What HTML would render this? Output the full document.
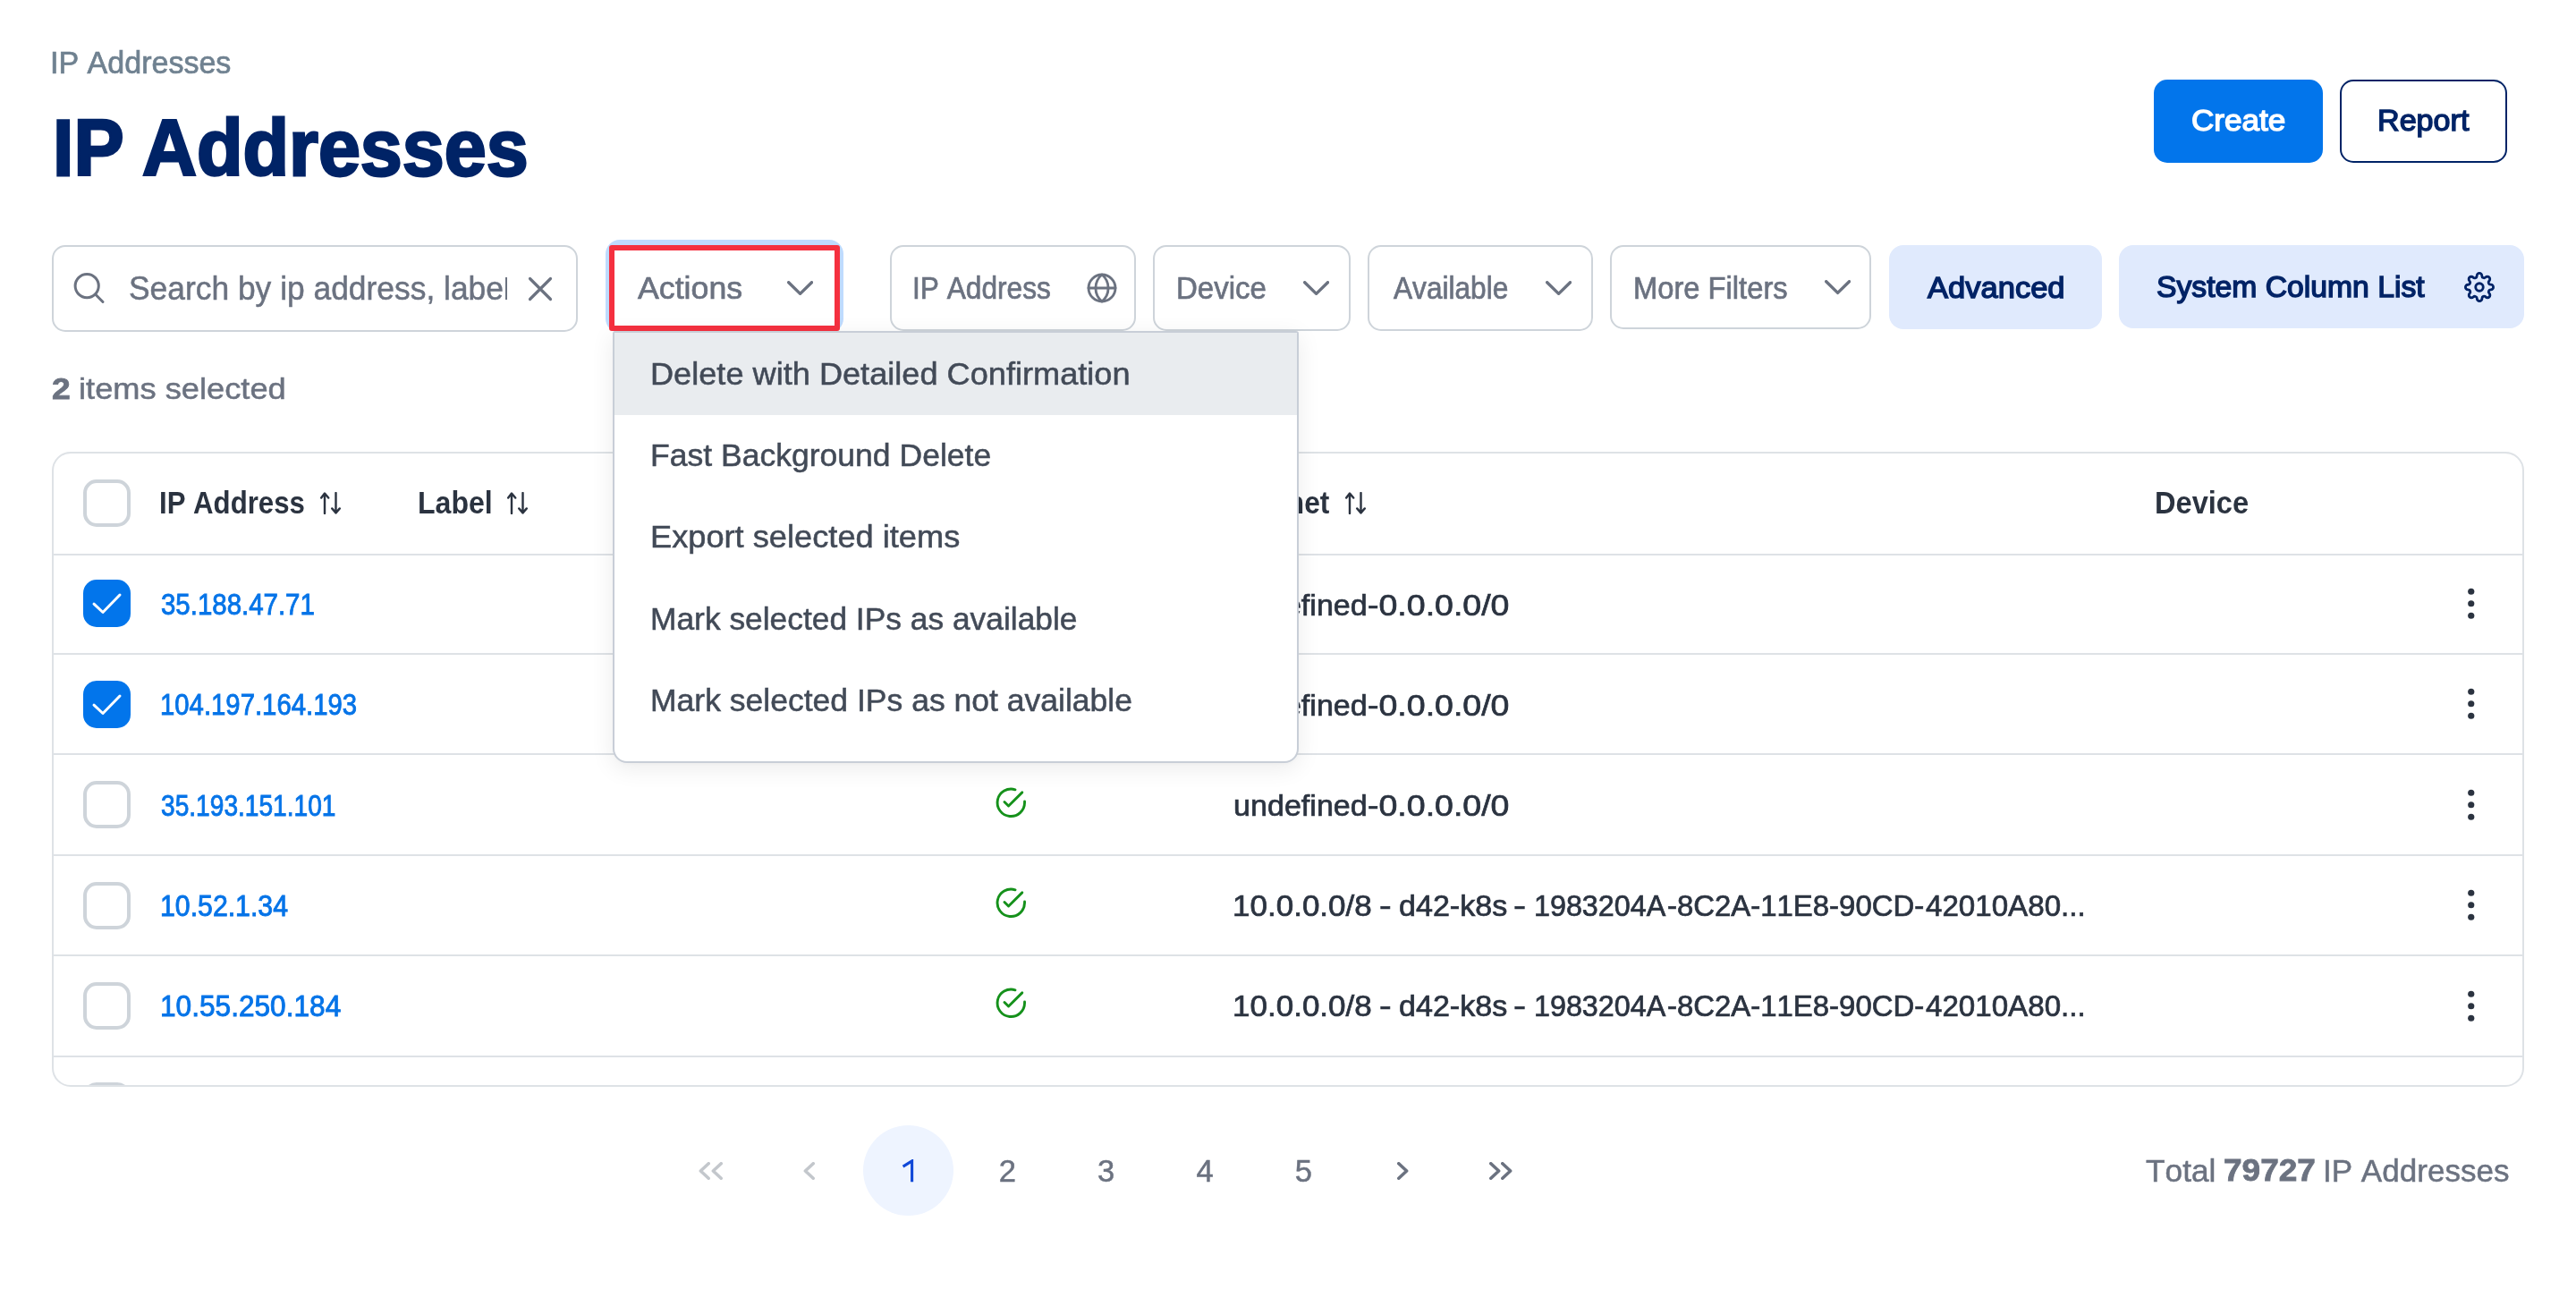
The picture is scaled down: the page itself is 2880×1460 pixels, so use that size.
<!DOCTYPE html>
<html><head><meta charset="utf-8"><title>IP Addresses</title>
<style>
html,body{margin:0;padding:0}
body{width:2880px;height:1460px;position:relative;overflow:hidden;background:#fff;
font-family:"Liberation Sans",sans-serif;font-kerning:none;}
.t{position:absolute;white-space:nowrap;line-height:1;transform-origin:0 0;display:block}
.b{position:absolute;display:block}
#page{position:absolute;left:0;top:0;width:2880px;height:1460px;will-change:transform}
</style></head>
<body>
<div id="page">
<!-- header -->
<span class="t" style="left:55.96px;top:53px;font-size:34.59px;transform:scaleX(0.9839);color:#6f8190;-webkit-text-stroke:0.7px #6f8190;">IP Addresses</span>
<span class="t" style="left:58.87px;top:121px;font-size:88.96px;transform:scaleX(0.946);color:#002366;font-weight:700;-webkit-text-stroke:2.8px #002366;">IP</span>
<span class="t" style="left:158.6px;top:121px;font-size:88.96px;transform:scaleX(0.9489);color:#002366;font-weight:700;-webkit-text-stroke:2.8px #002366;">Addresses</span>
<div class="b" style="left:2408px;top:89px;width:189px;height:93px;background:#0275eb;border-radius:15px;"></div>
<span class="t" style="left:2449.92px;top:118px;font-size:33.58px;transform:scaleX(1.0438);color:#fff;-webkit-text-stroke:1.4px #fff;">Create</span>
<div class="b" style="left:2616px;top:89px;width:187px;height:93px;border:2.5px solid #002366;border-radius:15px;box-sizing:border-box;"></div>
<span class="t" style="left:2657.65px;top:118px;font-size:33.58px;transform:scaleX(1.0161);color:#002366;-webkit-text-stroke:1.4px #002366;">Report</span>
<!-- filter bar -->
<div class="b" style="left:58px;top:274px;width:588px;height:97px;border:2px solid #ced4da;border-radius:15px;box-sizing:border-box;background:#fff;"></div>
<svg class="b" style="left:80px;top:302px;" width="40" height="40" viewBox="0 0 40 40"><circle cx="17.2" cy="17.6" r="13.1" fill="none" stroke="#6b7280" stroke-width="3"/><path d="M26.6 27 L35 35.5" stroke="#6b7280" stroke-width="3" stroke-linecap="round"/></svg>
<div class="b" style="left:140px;top:290px;width:427px;height:64px;overflow:hidden">
<span class="t" style="left:3.79px;top:15px;font-size:36.34px;transform:scaleX(0.974);color:#6b7280;-webkit-text-stroke:0.5px #6b7280">Search by ip address, labe</span>
<div class="b" style="left:425.3px;top:19.8px;width:1.8px;height:25.2px;background:#6b7280"></div>
</div>
<svg class="b" style="left:589px;top:308px;" width="30" height="30" viewBox="0 0 30 30"><path d="M3.5 3.5 L26.5 26.5 M26.5 3.5 L3.5 26.5" stroke="#6b7280" stroke-width="3.2" stroke-linecap="round"/></svg>
<div class="b" style="left:677px;top:268px;width:266px;height:104px;background:#bfdbfe;border-radius:16px;"></div>
<div class="b" style="left:681px;top:274px;width:258.4px;height:95.7px;border:6px solid #f5303f;border-radius:3px;box-sizing:border-box;background:#fff;"></div>
<span class="t" style="left:712.78px;top:305px;font-size:34.3px;transform:scaleX(1.0415);color:#6b7280;-webkit-text-stroke:0.7px #6b7280;">Actions</span>
<svg class="b" style="left:880px;top:313.8px;" width="29.2" height="16.4" viewBox="0 0 29.2 16.4"><path d="M1.7 1.7 L14.6 14.36 L27.5 1.7" fill="none" stroke="#6b7280" stroke-width="3.4" stroke-linecap="round" stroke-linejoin="round"/></svg>
<div class="b" style="left:995px;top:274px;width:275px;height:96px;border:2px solid #ced4da;border-radius:15px;box-sizing:border-box;background:#fff;"></div>
<span class="t" style="left:1020.43px;top:305px;font-size:34.3px;transform:scaleX(0.923);color:#6b7280;-webkit-text-stroke:0.7px #6b7280;">IP Address</span>
<svg class="b" style="left:1213.7px;top:304.1px;" width="36" height="36" viewBox="0 0 24 24"><g fill="none" stroke="#6b7280" stroke-width="1.9" stroke-linecap="round" stroke-linejoin="round"><circle cx="12" cy="12" r="10"/><line x1="2" y1="12" x2="22" y2="12"/><path d="M12 2a13 13 0 0 1 4.7 10 13 13 0 0 1-4.7 10 13 13 0 0 1-4.7-10 13 13 0 0 1 4.7-10z"/></g></svg>
<div class="b" style="left:1289px;top:274px;width:221px;height:96px;border:2px solid #ced4da;border-radius:15px;box-sizing:border-box;background:#fff;"></div>
<span class="t" style="left:1315.14px;top:305px;font-size:34.3px;transform:scaleX(0.9631);color:#6b7280;-webkit-text-stroke:0.7px #6b7280;">Device</span>
<svg class="b" style="left:1457.2px;top:313.8px;" width="29.2" height="16.4" viewBox="0 0 29.2 16.4"><path d="M1.7 1.7 L14.6 14.36 L27.5 1.7" fill="none" stroke="#6b7280" stroke-width="3.4" stroke-linecap="round" stroke-linejoin="round"/></svg>
<div class="b" style="left:1529px;top:274px;width:252px;height:96px;border:2px solid #ced4da;border-radius:15px;box-sizing:border-box;background:#fff;"></div>
<span class="t" style="left:1557.79px;top:305px;font-size:34.3px;transform:scaleX(0.9214);color:#6b7280;-webkit-text-stroke:0.7px #6b7280;">Available</span>
<svg class="b" style="left:1728px;top:313.8px;" width="29.2" height="16.4" viewBox="0 0 29.2 16.4"><path d="M1.7 1.7 L14.6 14.36 L27.5 1.7" fill="none" stroke="#6b7280" stroke-width="3.4" stroke-linecap="round" stroke-linejoin="round"/></svg>
<div class="b" style="left:1800px;top:274px;width:292px;height:94px;border:2px solid #ced4da;border-radius:15px;box-sizing:border-box;background:#fff;"></div>
<span class="t" style="left:1825.67px;top:305px;font-size:34.3px;transform:scaleX(0.9536);color:#6b7280;-webkit-text-stroke:0.7px #6b7280;">More Filters</span>
<svg class="b" style="left:2040.2px;top:313.2px;" width="29.2" height="16.4" viewBox="0 0 29.2 16.4"><path d="M1.7 1.7 L14.6 14.36 L27.5 1.7" fill="none" stroke="#6b7280" stroke-width="3.4" stroke-linecap="round" stroke-linejoin="round"/></svg>
<div class="b" style="left:2112px;top:274px;width:238px;height:94px;background:#e0eafd;border-radius:16px;"></div>
<span class="t" style="left:2154.88px;top:306px;font-size:32.85px;transform:scaleX(1.0516);color:#002366;-webkit-text-stroke:1.4px #002366;">Advanced</span>
<div class="b" style="left:2369px;top:274px;width:453px;height:93px;background:#e0eafd;border-radius:16px;"></div>
<span class="t" style="left:2410.92px;top:305px;font-size:32.49px;transform:scaleX(1.0373);color:#002366;-webkit-text-stroke:1.4px #002366;">System Column List</span>
<svg class="b" style="left:2755px;top:303.5px;" width="34" height="34" viewBox="0 0 24 24"><g fill="none" stroke="#002366" stroke-width="2" stroke-linecap="round" stroke-linejoin="round"><circle cx="12" cy="12" r="3"/><path d="M19.4 15a1.65 1.65 0 0 0 .33 1.82l.06.06a2 2 0 0 1 0 2.83 2 2 0 0 1-2.83 0l-.06-.06a1.65 1.65 0 0 0-1.82-.33 1.65 1.65 0 0 0-1 1.51V21a2 2 0 0 1-2 2 2 2 0 0 1-2-2v-.09A1.65 1.65 0 0 0 9 19.4a1.65 1.65 0 0 0-1.82.33l-.06.06a2 2 0 0 1-2.83 0 2 2 0 0 1 0-2.83l.06-.06a1.65 1.65 0 0 0 .33-1.82 1.65 1.65 0 0 0-1.51-1H3a2 2 0 0 1-2-2 2 2 0 0 1 2-2h.09A1.65 1.65 0 0 0 4.6 9a1.65 1.65 0 0 0-.33-1.82l-.06-.06a2 2 0 0 1 0-2.83 2 2 0 0 1 2.83 0l.06.06a1.65 1.65 0 0 0 1.82.33H9a1.65 1.65 0 0 0 1-1.51V3a2 2 0 0 1 2-2 2 2 0 0 1 2 2v.09a1.65 1.65 0 0 0 1 1.51 1.65 1.65 0 0 0 1.82-.33l.06-.06a2 2 0 0 1 2.83 0 2 2 0 0 1 0 2.83l-.06.06a1.65 1.65 0 0 0-.33 1.82V9a1.65 1.65 0 0 0 1.51 1H21a2 2 0 0 1 2 2 2 2 0 0 1-2 2h-.09a1.65 1.65 0 0 0-1.51 1z"/></g></svg>
<span class="t" style="left:57.86px;top:418px;font-size:33.58px;transform:scaleX(1.1101);color:#6b7280;font-weight:700;-webkit-text-stroke:0.8px #6b7280;">2</span>
<span class="t" style="left:87.82px;top:418px;font-size:33.58px;transform:scaleX(1.0798);color:#6b7280;-webkit-text-stroke:0.5px #6b7280;">items selected</span>
<!-- table -->
<div class="b" style="left:58px;top:505px;width:2764px;height:710px;border:2px solid #dee2e6;border-radius:21px;box-sizing:border-box;"></div>
<div class="b" style="left:60px;top:619px;width:2760px;height:2px;background:#dee2e6;"></div>
<div class="b" style="left:60px;top:730px;width:2760px;height:2px;background:#dee2e6;"></div>
<div class="b" style="left:60px;top:842px;width:2760px;height:2px;background:#dee2e6;"></div>
<div class="b" style="left:60px;top:954.5px;width:2760px;height:2.0px;background:#dee2e6;"></div>
<div class="b" style="left:60px;top:1067px;width:2760px;height:2px;background:#dee2e6;"></div>
<div class="b" style="left:60px;top:1180px;width:2760px;height:2px;background:#dee2e6;"></div>
<div class="b" style="left:93px;top:536.25px;width:52.5px;height:52.5px;border:4px solid #ced4da;border-radius:15px;box-sizing:border-box;background:#fff;"></div>
<span class="t" style="left:178.41px;top:545px;font-size:34.52px;transform:scaleX(0.9031);color:#2b3340;font-weight:700;">IP Address</span>
<svg class="b" style="left:357.6px;top:549.5px;" width="23" height="25" viewBox="0 0 23 25"><g fill="none" stroke="#2b3340" stroke-width="2.4" stroke-linecap="round" stroke-linejoin="round"><path d="M5 24 V1.6 M1.2 6.6 L5 1.6 L9.2 6.6"/><path d="M17.5 1 V23.4 M13.2 18.4 L17.5 23.4 L21.8 18.4"/></g></svg>
<span class="t" style="left:466.86px;top:545px;font-size:34.52px;transform:scaleX(0.9279);color:#2b3340;font-weight:700;">Label</span>
<svg class="b" style="left:566.8px;top:549.5px;" width="23" height="25" viewBox="0 0 23 25"><g fill="none" stroke="#2b3340" stroke-width="2.4" stroke-linecap="round" stroke-linejoin="round"><path d="M5 24 V1.6 M1.2 6.6 L5 1.6 L9.2 6.6"/><path d="M17.5 1 V23.4 M13.2 18.4 L17.5 23.4 L21.8 18.4"/></g></svg>
<span class="t" style="left:1379.09px;top:545px;font-size:34.52px;transform:scaleX(0.9172);color:#2b3340;font-weight:700;">Subnet</span>
<svg class="b" style="left:1504.4px;top:549.5px;" width="23" height="25" viewBox="0 0 23 25"><g fill="none" stroke="#2b3340" stroke-width="2.4" stroke-linecap="round" stroke-linejoin="round"><path d="M5 24 V1.6 M1.2 6.6 L5 1.6 L9.2 6.6"/><path d="M17.5 1 V23.4 M13.2 18.4 L17.5 23.4 L21.8 18.4"/></g></svg>
<span class="t" style="left:2408.82px;top:545px;font-size:34.52px;transform:scaleX(0.9436);color:#2b3340;font-weight:700;">Device</span>
<div class="b" style="left:93px;top:648px;width:52.5px;height:52.5px;background:#0275eb;border-radius:15px;"></div>
<svg class="b" style="left:93px;top:648px;" width="52.5" height="52.5" viewBox="0 0 52.5 52.5"><path d="M12 27.2 L22 36.5 L41 17" fill="none" stroke="#fff" stroke-width="3" stroke-linecap="round" stroke-linejoin="round"/></svg>
<span class="t" style="left:179.83px;top:659px;font-size:33.21px;transform:scaleX(0.8865);color:#0674e8;-webkit-text-stroke:0.9px #0674e8;">35.188.47.71</span>
<span class="t" style="left:1378.84px;top:660px;font-size:33.5px;transform:scaleX(1.0179);color:#2b3340;-webkit-text-stroke:0.7px #2b3340;">undefined</span>
<span class="t" style="left:1528.88px;top:660px;font-size:33.5px;transform:scaleX(1.1196);color:#2b3340;-webkit-text-stroke:0.7px #2b3340;">-0.0.0.0/0</span>
<svg class="b" style="left:1111.65px;top:654.5px;" width="36.6" height="36.6" viewBox="0 0 24 24"><g fill="none" stroke="#15911b" stroke-width="1.9" stroke-linecap="round" stroke-linejoin="round"><path d="M22 11.08V12a10 10 0 1 1-6.9-9.51"/><polyline points="20.2 4.5 10.2 14.45 7.2 11.45"/></g></svg>
<svg class="b" style="left:2757px;top:654.5px;" width="12" height="40" viewBox="0 0 12 40"><g fill="#2b3340"><circle cx="5.75" cy="6.25" r="3.6"/><circle cx="5.75" cy="19.75" r="3.6"/><circle cx="5.75" cy="33.25" r="3.6"/></g></svg>
<div class="b" style="left:93px;top:761px;width:52.5px;height:52.5px;background:#0275eb;border-radius:15px;"></div>
<svg class="b" style="left:93px;top:761px;" width="52.5" height="52.5" viewBox="0 0 52.5 52.5"><path d="M12 27.2 L22 36.5 L41 17" fill="none" stroke="#fff" stroke-width="3" stroke-linecap="round" stroke-linejoin="round"/></svg>
<span class="t" style="left:178.72px;top:771px;font-size:33.21px;transform:scaleX(0.8828);color:#0674e8;-webkit-text-stroke:0.9px #0674e8;">104.197.164.193</span>
<span class="t" style="left:1378.84px;top:772px;font-size:33.5px;transform:scaleX(1.0179);color:#2b3340;-webkit-text-stroke:0.7px #2b3340;">undefined</span>
<span class="t" style="left:1528.88px;top:772px;font-size:33.5px;transform:scaleX(1.1196);color:#2b3340;-webkit-text-stroke:0.7px #2b3340;">-0.0.0.0/0</span>
<svg class="b" style="left:1111.65px;top:766.5px;" width="36.6" height="36.6" viewBox="0 0 24 24"><g fill="none" stroke="#15911b" stroke-width="1.9" stroke-linecap="round" stroke-linejoin="round"><path d="M22 11.08V12a10 10 0 1 1-6.9-9.51"/><polyline points="20.2 4.5 10.2 14.45 7.2 11.45"/></g></svg>
<svg class="b" style="left:2757px;top:767.15px;" width="12" height="40" viewBox="0 0 12 40"><g fill="#2b3340"><circle cx="5.75" cy="6.25" r="3.6"/><circle cx="5.75" cy="19.75" r="3.6"/><circle cx="5.75" cy="33.25" r="3.6"/></g></svg>
<div class="b" style="left:93px;top:873.25px;width:52.5px;height:52.5px;border:4px solid #ced4da;border-radius:15px;box-sizing:border-box;background:#fff;"></div>
<span class="t" style="left:179.88px;top:884px;font-size:33.21px;transform:scaleX(0.847);color:#0674e8;-webkit-text-stroke:0.9px #0674e8;">35.193.151.101</span>
<span class="t" style="left:1378.84px;top:884px;font-size:33.5px;transform:scaleX(1.0179);color:#2b3340;-webkit-text-stroke:0.7px #2b3340;">undefined</span>
<span class="t" style="left:1528.88px;top:884px;font-size:33.5px;transform:scaleX(1.1196);color:#2b3340;-webkit-text-stroke:0.7px #2b3340;">-0.0.0.0/0</span>
<svg class="b" style="left:1111.65px;top:879.0px;" width="36.6" height="36.6" viewBox="0 0 24 24"><g fill="none" stroke="#15911b" stroke-width="1.9" stroke-linecap="round" stroke-linejoin="round"><path d="M22 11.08V12a10 10 0 1 1-6.9-9.51"/><polyline points="20.2 4.5 10.2 14.45 7.2 11.45"/></g></svg>
<svg class="b" style="left:2757px;top:879.65px;" width="12" height="40" viewBox="0 0 12 40"><g fill="#2b3340"><circle cx="5.75" cy="6.25" r="3.6"/><circle cx="5.75" cy="19.75" r="3.6"/><circle cx="5.75" cy="33.25" r="3.6"/></g></svg>
<div class="b" style="left:93px;top:986px;width:52.5px;height:52.5px;border:4px solid #ced4da;border-radius:15px;box-sizing:border-box;background:#fff;"></div>
<span class="t" style="left:178.64px;top:996px;font-size:33.21px;transform:scaleX(0.9112);color:#0674e8;-webkit-text-stroke:0.9px #0674e8;">10.52.1.34</span>
<span class="t" style="left:1378.38px;top:996px;font-size:33.5px;transform:scaleX(1.0453);color:#2b3340;-webkit-text-stroke:0.7px #2b3340;">10.0.0.0/8</span>
<span class="t" style="left:1542.23px;top:996px;font-size:33.5px;transform:scaleX(1.2226);color:#2b3340;-webkit-text-stroke:0.7px #2b3340;">-</span>
<span class="t" style="left:1563.62px;top:996px;font-size:33.5px;transform:scaleX(1.0174);color:#2b3340;-webkit-text-stroke:0.7px #2b3340;">d42-k8s</span>
<span class="t" style="left:1692.28px;top:996px;font-size:33.5px;transform:scaleX(1.2592);color:#2b3340;-webkit-text-stroke:0.7px #2b3340;">-</span>
<span class="t" style="left:1715.29px;top:996px;font-size:33.5px;transform:scaleX(0.9636);color:#2b3340;-webkit-text-stroke:0.7px #2b3340;">1983204A</span>
<span class="t" style="left:1864.39px;top:996px;font-size:33.5px;transform:scaleX(0.9825);color:#2b3340;-webkit-text-stroke:0.7px #2b3340;">-8C2A-11E8-90CD-</span>
<span class="t" style="left:2153.39px;top:996px;font-size:33.5px;transform:scaleX(0.9888);color:#2b3340;-webkit-text-stroke:0.7px #2b3340;">42010A80...</span>
<svg class="b" style="left:1111.65px;top:991.25px;" width="36.6" height="36.6" viewBox="0 0 24 24"><g fill="none" stroke="#15911b" stroke-width="1.9" stroke-linecap="round" stroke-linejoin="round"><path d="M22 11.08V12a10 10 0 1 1-6.9-9.51"/><polyline points="20.2 4.5 10.2 14.45 7.2 11.45"/></g></svg>
<svg class="b" style="left:2757px;top:992.15px;" width="12" height="40" viewBox="0 0 12 40"><g fill="#2b3340"><circle cx="5.75" cy="6.25" r="3.6"/><circle cx="5.75" cy="19.75" r="3.6"/><circle cx="5.75" cy="33.25" r="3.6"/></g></svg>
<div class="b" style="left:93px;top:1098.25px;width:52.5px;height:52.5px;border:4px solid #ced4da;border-radius:15px;box-sizing:border-box;background:#fff;"></div>
<span class="t" style="left:178.54px;top:1108px;font-size:33.21px;transform:scaleX(0.9526);color:#0674e8;-webkit-text-stroke:0.9px #0674e8;">10.55.250.184</span>
<span class="t" style="left:1378.38px;top:1108px;font-size:33.5px;transform:scaleX(1.0453);color:#2b3340;-webkit-text-stroke:0.7px #2b3340;">10.0.0.0/8</span>
<span class="t" style="left:1542.23px;top:1108px;font-size:33.5px;transform:scaleX(1.2226);color:#2b3340;-webkit-text-stroke:0.7px #2b3340;">-</span>
<span class="t" style="left:1563.62px;top:1108px;font-size:33.5px;transform:scaleX(1.0174);color:#2b3340;-webkit-text-stroke:0.7px #2b3340;">d42-k8s</span>
<span class="t" style="left:1692.28px;top:1108px;font-size:33.5px;transform:scaleX(1.2592);color:#2b3340;-webkit-text-stroke:0.7px #2b3340;">-</span>
<span class="t" style="left:1715.29px;top:1108px;font-size:33.5px;transform:scaleX(0.9636);color:#2b3340;-webkit-text-stroke:0.7px #2b3340;">1983204A</span>
<span class="t" style="left:1864.39px;top:1108px;font-size:33.5px;transform:scaleX(0.9825);color:#2b3340;-webkit-text-stroke:0.7px #2b3340;">-8C2A-11E8-90CD-</span>
<span class="t" style="left:2153.39px;top:1108px;font-size:33.5px;transform:scaleX(0.9888);color:#2b3340;-webkit-text-stroke:0.7px #2b3340;">42010A80...</span>
<svg class="b" style="left:1111.65px;top:1103.25px;" width="36.6" height="36.6" viewBox="0 0 24 24"><g fill="none" stroke="#15911b" stroke-width="1.9" stroke-linecap="round" stroke-linejoin="round"><path d="M22 11.08V12a10 10 0 1 1-6.9-9.51"/><polyline points="20.2 4.5 10.2 14.45 7.2 11.45"/></g></svg>
<svg class="b" style="left:2757px;top:1104.65px;" width="12" height="40" viewBox="0 0 12 40"><g fill="#2b3340"><circle cx="5.75" cy="6.25" r="3.6"/><circle cx="5.75" cy="19.75" r="3.6"/><circle cx="5.75" cy="33.25" r="3.6"/></g></svg>
<div class="b" style="left:60px;top:1200px;width:400px;height:13px;overflow:hidden">
<div class="b" style="left:33px;top:9.5px;width:52.5px;height:52.5px;border:4px solid #ced4da;border-radius:15px;box-sizing:border-box"></div>
</div>
<!-- paginator -->
<svg class="b" style="left:781.25px;top:1298.75px;" width="13.0" height="20.0" viewBox="0 0 13.0 20.0"><path d="M11.2 1.8 L2.34 10.0 L11.2 18.2" fill="none" stroke="#c3c7cc" stroke-width="3.6" stroke-linecap="round" stroke-linejoin="round"/></svg>
<svg class="b" style="left:795px;top:1298.75px;" width="13" height="20.0" viewBox="0 0 13 20.0"><path d="M11.2 1.8 L2.34 10.0 L11.2 18.2" fill="none" stroke="#c3c7cc" stroke-width="3.6" stroke-linecap="round" stroke-linejoin="round"/></svg>
<svg class="b" style="left:898.25px;top:1298.75px;" width="13.0" height="20.0" viewBox="0 0 13.0 20.0"><path d="M11.2 1.8 L2.34 10.0 L11.2 18.2" fill="none" stroke="#c3c7cc" stroke-width="3.6" stroke-linecap="round" stroke-linejoin="round"/></svg>
<div class="b" style="left:965px;top:1258px;width:101px;height:101px;background:#eef4ff;border-radius:50%;"></div>
<svg class="b" style="left:1008px;top:1296px;" width="16" height="27" viewBox="0 0 16 27"><path d="M1.6 8.1 L11.6 1.9 V25.3" fill="none" stroke="#1048d8" stroke-width="3.1" stroke-linejoin="miter"/></svg>
<span class="t" style="left:1116.73px;top:1292px;font-size:34.52px;transform:scaleX(1.0);color:#6b7280;-webkit-text-stroke:0.5px #6b7280;">2</span>
<span class="t" style="left:1227.08px;top:1292px;font-size:34.52px;transform:scaleX(1.0);color:#6b7280;-webkit-text-stroke:0.5px #6b7280;">3</span>
<span class="t" style="left:1337.45px;top:1292px;font-size:34.52px;transform:scaleX(1.0);color:#6b7280;-webkit-text-stroke:0.5px #6b7280;">4</span>
<span class="t" style="left:1447.64px;top:1292px;font-size:34.52px;transform:scaleX(1.0);color:#6b7280;-webkit-text-stroke:0.5px #6b7280;">5</span>
<svg class="b" style="left:1561.5px;top:1298.75px;" width="13.0" height="20.0" viewBox="0 0 13.0 20.0"><path d="M1.8 1.8 L10.66 10.0 L1.8 18.2" fill="none" stroke="#6b7280" stroke-width="3.6" stroke-linecap="round" stroke-linejoin="round"/></svg>
<svg class="b" style="left:1664.75px;top:1298.75px;" width="13.0" height="20.0" viewBox="0 0 13.0 20.0"><path d="M1.8 1.8 L10.66 10.0 L1.8 18.2" fill="none" stroke="#6b7280" stroke-width="3.6" stroke-linecap="round" stroke-linejoin="round"/></svg>
<svg class="b" style="left:1677.75px;top:1298.75px;" width="13.0" height="20.0" viewBox="0 0 13.0 20.0"><path d="M1.8 1.8 L10.66 10.0 L1.8 18.2" fill="none" stroke="#6b7280" stroke-width="3.6" stroke-linecap="round" stroke-linejoin="round"/></svg>
<span class="t" style="left:2399.21px;top:1292px;font-size:34.88px;transform:scaleX(1.0109);color:#6b7280;-webkit-text-stroke:0.5px #6b7280;">Total</span>
<span class="t" style="left:2485.56px;top:1291px;font-size:34.45px;transform:scaleX(1.0744);color:#6b7280;font-weight:700;-webkit-text-stroke:0.8px #6b7280;">79727</span>
<span class="t" style="left:2596.76px;top:1292px;font-size:34.88px;transform:scaleX(1.005);color:#6b7280;-webkit-text-stroke:0.5px #6b7280;">IP Addresses</span>
<!-- actions dropdown -->
<div class="b" style="left:684.5px;top:370px;width:767.5px;height:483px;background:#fff;border:2px solid #c8ced7;border-radius:3px 3px 16px 16px;box-sizing:border-box;box-shadow:0 6px 26px 1px rgba(0,0,0,.075), 0 2px 6px rgba(0,0,0,.025);overflow:hidden;"><div class="b" style="left:0;top:0;width:100%;height:91.6px;background:#e9ecef"></div></div>
<span class="t" style="left:726.78px;top:401px;font-size:34.16px;transform:scaleX(1.0585);color:#424a57;-webkit-text-stroke:0.5px #424a57;">Delete with Detailed Confirmation</span>
<span class="t" style="left:726.83px;top:492px;font-size:34.16px;transform:scaleX(1.0404);color:#424a57;-webkit-text-stroke:0.5px #424a57;">Fast Background Delete</span>
<span class="t" style="left:726.78px;top:583px;font-size:34.16px;transform:scaleX(1.0605);color:#424a57;-webkit-text-stroke:0.5px #424a57;">Export selected items</span>
<span class="t" style="left:726.85px;top:675px;font-size:34.16px;transform:scaleX(1.035);color:#424a57;-webkit-text-stroke:0.5px #424a57;">Mark selected IPs as available</span>
<span class="t" style="left:726.84px;top:766px;font-size:34.16px;transform:scaleX(1.0399);color:#424a57;-webkit-text-stroke:0.5px #424a57;">Mark selected IPs as not available</span>
</div>
</body></html>
